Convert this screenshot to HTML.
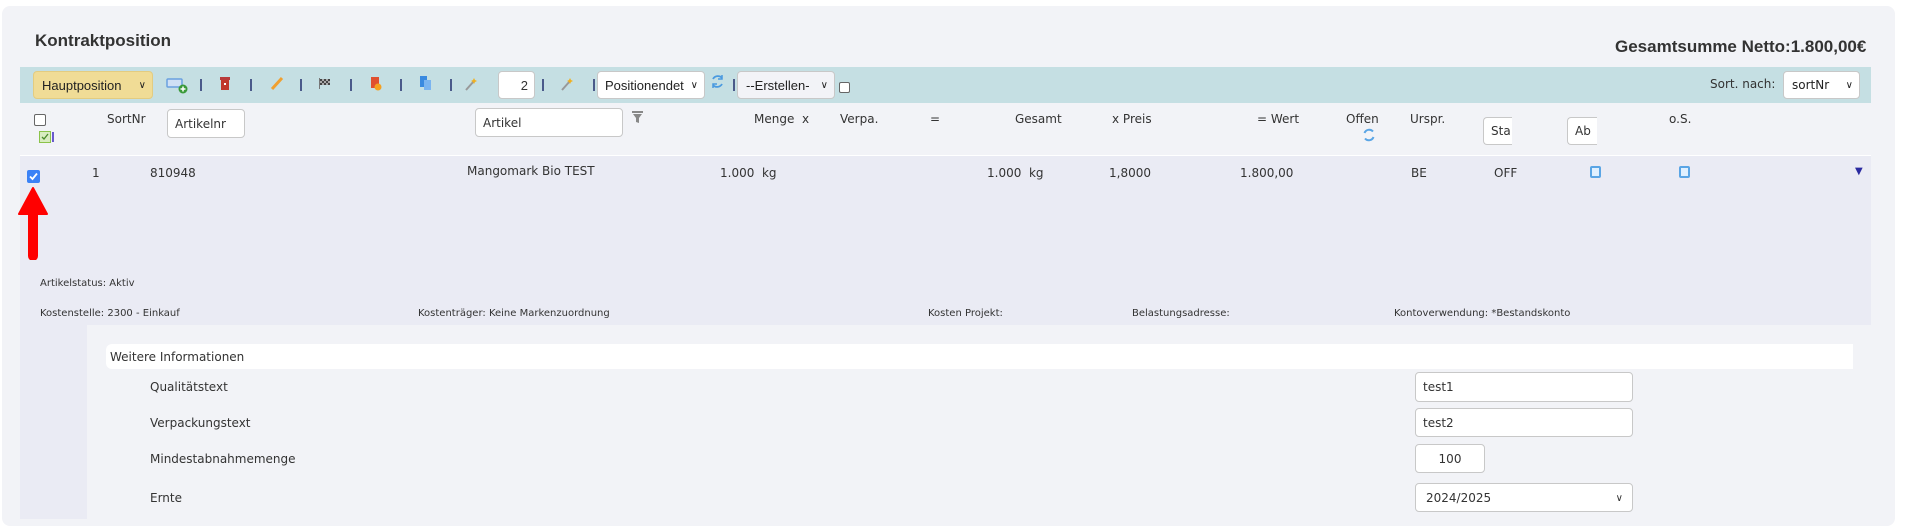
<!DOCTYPE html>
<html><head><meta charset="utf-8"><style>
*{box-sizing:border-box;margin:0;padding:0}
body{width:1905px;height:519px;background:#fff;position:relative;overflow:hidden;font-family:"DejaVu Sans",Verdana,sans-serif;font-size:12px;color:#333}
.a{position:absolute;white-space:nowrap}
.panel{position:absolute;left:2px;top:6px;width:1893px;height:520px;background:#f2f3f7;border-radius:8px}
.inp{position:absolute;background:#fff;border:1px solid #c8c8c8;border-radius:4px;font-size:12px;padding-left:7px;display:flex;align-items:center;overflow:hidden}
.sel{position:absolute;background:#fff;border:1px solid #c8c8c8;border-radius:4px;font-family:"Liberation Sans",sans-serif;font-size:13px;display:flex;align-items:center;padding-left:8px;color:#222}
.chev{position:absolute;right:6px;top:50%;margin-top:-5px;font-size:10px}
.sep{position:absolute;top:79px;width:2px;height:12px;background:#4a5a8a}
.sm{font-size:10px}
</style></head><body>
<div class="panel"></div>
<div class="a" style="left:35px;top:31px;font-family:'Liberation Sans',sans-serif;font-weight:bold;font-size:17px;color:#333">Kontraktposition</div>
<div class="a" style="left:1615px;top:37px;font-family:'Liberation Sans',sans-serif;font-weight:bold;font-size:17px;color:#333">Gesamtsumme Netto:1.800,00€</div>

<!-- toolbar -->
<div class="a" style="left:20px;top:67px;width:1851px;height:36px;background:#c5dfe3"></div>
<div class="sel" style="left:33px;top:71px;width:120px;height:28px;background:#f0dc96;border-color:#e3cc80">Hauptposition<span class="chev">&#x2228;</span></div>
<svg class="a" style="left:166px;top:77px" width="22" height="17"><rect x="1" y="2" width="15" height="8" rx="1" fill="#cfe0f5" stroke="#6aa0e0" stroke-width="1.5"/><circle cx="17" cy="12" r="4.5" fill="#3a9a3a"/><path d="M17 9.5v5M14.5 12h5" stroke="#fff" stroke-width="1.5"/></svg>
<div class="sep" style="left:200px"></div>
<svg class="a" style="left:219px;top:77px" width="12" height="14"><rect x="1" y="0" width="10" height="3" fill="#b83a3a"/><rect x="2" y="3" width="8" height="10" fill="#c0392b"/><rect x="5" y="6" width="2" height="2" fill="#fff"/></svg>
<div class="sep" style="left:250px"></div>
<svg class="a" style="left:270px;top:76px" width="14" height="15"><path d="M2 13L12 2" stroke="#f0a030" stroke-width="3"/></svg>
<div class="sep" style="left:300px"></div>
<svg class="a" style="left:318px;top:78px" width="13" height="11"><rect x="1" y="0" width="1" height="11" fill="#777"/><path d="M2 1h10v6H2z" fill="#aaa"/><path d="M2 1h2v2H2zM6 1h2v2H6zM10 1h2v2h-2zM4 3h2v2H4zM8 3h2v2H8zM2 5h2v2H2zM6 5h2v2H6zM10 5h2v2h-2z" fill="#444"/></svg>
<div class="sep" style="left:350px"></div>
<svg class="a" style="left:370px;top:77px" width="12" height="14"><rect x="1" y="0" width="8" height="11" fill="#e05030"/><circle cx="8" cy="10" r="3.5" fill="#f5a020"/></svg>
<div class="sep" style="left:400px"></div>
<svg class="a" style="left:419px;top:76px" width="13" height="15"><rect x="1" y="0" width="7" height="11" fill="#3a8ae0"/><rect x="5" y="4" width="7" height="10" fill="#7ab4f0"/></svg>
<div class="sep" style="left:450px"></div>
<svg class="a" style="left:464px;top:77px" width="14" height="14"><path d="M2 13L10 4" stroke="#999" stroke-width="2"/><path d="M10 1l1 2 2 1-2 1-1 2-1-2-2-1 2-1z" fill="#f0b020"/></svg>
<div class="inp" style="left:498px;top:71px;width:37px;height:28px;justify-content:flex-end;padding-right:6px;font-family:'Liberation Sans',sans-serif;font-size:13px">2</div>
<div class="sep" style="left:542px"></div>
<svg class="a" style="left:560px;top:77px" width="14" height="14"><path d="M2 13L10 4" stroke="#999" stroke-width="2"/><path d="M10 1l1 2 2 1-2 1-1 2-1-2-2-1 2-1z" fill="#f0b020"/></svg>
<div class="sep" style="left:593px"></div>
<div class="sel" style="left:597px;top:71px;width:108px;height:28px;padding-left:7px">Positionendet<span class="chev" style="background:#fff;padding-left:2px">&#x2228;</span></div>
<svg class="a" style="left:710px;top:74px" width="15" height="15"><path d="M12 4A5.5 5.5 0 0 0 3 5M3 11A5.5 5.5 0 0 0 12 10" stroke="#4a9ae0" stroke-width="1.8" fill="none"/><path d="M12 1v4H8M3 14v-4h4" stroke="#4a9ae0" stroke-width="1.5" fill="none"/></svg>
<div class="sep" style="left:733px"></div>
<div class="sel" style="left:737px;top:71px;width:98px;height:28px;background:#f2f3f7">--Erstellen-<span class="chev">&#x2228;</span></div>
<div class="a" style="left:839px;top:82px;width:11px;height:11px;border:1px solid #666;border-radius:2px;background:#fff"></div>
<div class="a" style="left:1710px;top:77px;font-size:12px">Sort. nach:</div>
<div class="sel" style="left:1783px;top:71px;width:77px;height:28px;font-family:'DejaVu Sans',sans-serif;font-size:12px">sortNr<span class="chev">&#x2228;</span></div>

<!-- header row -->
<div class="a" style="left:34px;top:114px;width:12px;height:12px;border:1px solid #666;border-radius:2px;background:#fff"></div>
<svg class="a" style="left:39px;top:131px" width="16" height="12"><rect x="0.5" y="0.5" width="11" height="11" fill="#d8ecc0" stroke="#8bc34a"/><path d="M3 6l2 2 4-5" stroke="#4a8a2a" stroke-width="1.3" fill="none"/><rect x="13" y="1" width="2" height="10" fill="#6a5acd"/></svg>
<div class="a" style="left:107px;top:112px">SortNr</div>
<div class="inp" style="left:167px;top:109px;width:78px;height:29px">Artikelnr</div>
<div class="inp" style="left:475px;top:108px;width:148px;height:29px">Artikel</div>
<svg class="a" style="left:632px;top:111px" width="11" height="13"><path d="M0 0h11v2H0z M1 3h9l-3 4v5l-3-1V7z" fill="#888"/></svg>
<div class="a" style="left:754px;top:112px">Menge &nbsp;x</div>
<div class="a" style="left:840px;top:112px">Verpa.</div>
<div class="a" style="left:930px;top:112px">=</div>
<div class="a" style="left:1015px;top:112px">Gesamt</div>
<div class="a" style="left:1112px;top:112px">x Preis</div>
<div class="a" style="left:1257px;top:112px">= Wert</div>
<div class="a" style="left:1346px;top:112px">Offen</div>
<svg class="a" style="left:1362px;top:128px" width="14" height="14"><path d="M11 3.5A5 5 0 0 0 2.5 5M3 10.5A5 5 0 0 0 11.5 9" stroke="#5aa5e5" stroke-width="2" fill="none"/></svg>
<div class="a" style="left:1410px;top:112px">Urspr.</div>
<div class="inp" style="left:1483px;top:117px;width:29px;height:28px;border-right:none;border-radius:4px 0 0 4px">Sta</div>
<div class="inp" style="left:1567px;top:117px;width:30px;height:28px;border-right:none;border-radius:4px 0 0 4px">Ab</div>
<div class="a" style="left:1669px;top:112px">o.S.</div>
<div class="a" style="left:20px;top:155px;width:1851px;height:1px;background:#fff"></div>

<!-- data row -->
<div class="a" style="left:20px;top:156px;width:1851px;height:169px;background:#eaebf4"></div>
<div class="a" style="left:20px;top:325px;width:67px;height:194px;background:#eaebf4"></div>
<div class="a" style="left:27px;top:170px;width:13px;height:13px;background:#3b82f6;border-radius:2px"></div>
<svg class="a" style="left:27px;top:170px" width="13" height="13"><path d="M3 6.5l2.5 2.5 4.5-5.5" stroke="#fff" stroke-width="1.8" fill="none"/></svg>
<svg class="a" style="left:18px;top:186px" width="32" height="74"><path d="M15 2L1 28h10v42a4 4 0 0 0 8 0V28h10z" fill="#f00" stroke="#f00" stroke-width="2" stroke-linejoin="round"/></svg>
<div class="a" style="left:92px;top:166px">1</div>
<div class="a" style="left:150px;top:166px">810948</div>
<div class="a" style="left:467px;top:164px">Mangomark Bio TEST</div>
<div class="a" style="left:720px;top:166px">1.000 &nbsp;kg</div>
<div class="a" style="left:987px;top:166px">1.000 &nbsp;kg</div>
<div class="a" style="left:1109px;top:166px">1,8000</div>
<div class="a" style="left:1240px;top:166px">1.800,00</div>
<div class="a" style="left:1411px;top:166px">BE</div>
<div class="a" style="left:1494px;top:166px">OFF</div>
<div class="a" style="left:1590px;top:166px;width:11px;height:12px;border:2px solid #5aa5e5;border-radius:2px;background:#e0f0ff"></div>
<div class="a" style="left:1679px;top:166px;width:11px;height:12px;border:2px solid #5aa5e5;border-radius:2px;background:#e0f0ff"></div>
<div class="a" style="left:1855px;top:166px;font-size:10px;color:#2a2aa0">&#9660;</div>

<div class="a sm" style="left:40px;top:278px">Artikelstatus: Aktiv</div>
<div class="a sm" style="left:40px;top:308px">Kostenstelle: 2300 - Einkauf</div>
<div class="a sm" style="left:418px;top:308px">Kostenträger: Keine Markenzuordnung</div>
<div class="a sm" style="left:928px;top:308px">Kosten Projekt:</div>
<div class="a sm" style="left:1132px;top:308px">Belastungsadresse:</div>
<div class="a sm" style="left:1394px;top:308px">Kontoverwendung: *Bestandskonto</div>

<!-- weitere -->
<div class="a" style="left:106px;top:344px;width:1747px;height:25px;background:#fff;border-radius:6px 0 0 6px"></div>
<div class="a" style="left:110px;top:350px">Weitere Informationen</div>
<div class="a" style="left:150px;top:380px">Qualitätstext</div>
<div class="a" style="left:150px;top:416px">Verpackungstext</div>
<div class="a" style="left:150px;top:452px">Mindestabnahmemenge</div>
<div class="a" style="left:150px;top:491px">Ernte</div>
<div class="inp" style="left:1415px;top:372px;width:218px;height:30px">test1</div>
<div class="inp" style="left:1415px;top:408px;width:218px;height:29px">test2</div>
<div class="inp" style="left:1415px;top:444px;width:70px;height:29px;justify-content:center;padding:0">100</div>
<div class="inp" style="left:1415px;top:483px;width:218px;height:29px;padding-left:10px">2024/2025<span class="chev" style="right:9px">&#x2228;</span></div>
</body></html>
